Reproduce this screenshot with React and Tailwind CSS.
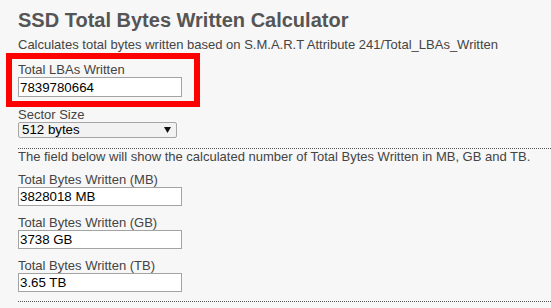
import { useState } from 'react';

const fields = [
  { label: 'Total Bytes Written (MB)', value: '3828018 MB' },
  { label: 'Total Bytes Written (GB)', value: '3738 GB' },
  { label: 'Total Bytes Written (TB)', value: '3.65 TB' },
];

function Field({ label, value, onChange }) {
  return (
    <div className="mb-2">
      <label className="block h-[15px] leading-[15px]">{label}</label>
      <input
        type="text"
        value={value}
        onChange={onChange}
        readOnly={!onChange}
        className="block h-[19px] w-[164px] border border-[#a3a3a3] bg-white px-[1px] text-[13.3px] text-black outline-none"
      />
    </div>
  );
}

export default function App() {
  const [lbas, setLbas] = useState('7839780664');

  return (
    <div
      className="min-h-[308px] overflow-hidden bg-[#f7f7f7] pl-[18px] text-[13px] text-[#444]"
      style={{ fontFamily: '"Liberation Sans", Arial, sans-serif' }}
    >
      <h1 className="pt-[9px] text-[20px] font-bold leading-[23px] text-[#555]">
        SSD Total Bytes Written Calculator
      </h1>
      <p className="mt-[5px] h-[16px] leading-[15px]">
        Calculates total bytes written based on S.M.A.R.T Attribute 241/Total_LBAs_Written
      </p>

      <div className="-ml-[12px] w-[194px] border-[6px] border-[#ff0000] pb-[4px] pl-[6px] pt-[3px]">
        <label className="block h-[15px] leading-[15px]">Total LBAs Written</label>
        <input
          type="text"
          value={lbas}
          onChange={(e) => setLbas(e.target.value)}
          className="block h-[20px] w-[164px] border border-[#a3a3a3] bg-white px-[1px] text-[13.3px] text-black outline-none"
        />
      </div>

      <label className="block h-[15px] leading-[15px]">Sector Size</label>
      <div className="flex h-[16px] w-[159px] items-center justify-between rounded-[2px] border border-[#a6a6a6] bg-[#f2f2f2] pl-[3px] pr-[5px] text-[13.3px] text-black">
        <span>512 bytes</span>
        <svg width="7" height="6" viewBox="0 0 7 6">
          <path d="M0 0 H7 L3.5 6 Z" fill="#111" />
        </svg>
      </div>

      <div className="mt-[10px] border-t border-dotted border-[#555]">
        <p className="mb-2 leading-[15px]">
          The field below will show the calculated number of Total Bytes Written in MB, GB and TB.
        </p>
        {fields.map((f, i) => (
          <div key={f.label} className={i > 0 ? 'pt-px' : ''}>
            <Field label={f.label} value={f.value} />
          </div>
        ))}
        <div className="mt-[9px] border-t border-dotted border-[#555]" />
      </div>
    </div>
  );
}
